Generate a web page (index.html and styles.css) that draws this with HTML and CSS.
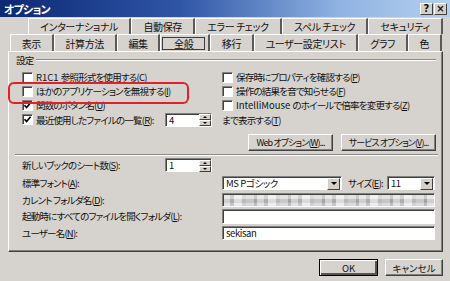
FILE: index.html
```html
<!DOCTYPE html>
<html lang="ja">

<head>
    <meta charset="UTF-8">
    <title>オプション</title>
    <link rel="stylesheet" href="styles.css">
</head>

<body>
    <div class="window">
        <div class="titlebar">
            <span class="title">オプション</span>
            <div class="title-buttons">
                <span class="tbtn">?</span>
                <span class="tbtn">×</span>
            </div>
        </div>

        <div class="tabs">
            <div class="tab-row back">
                <div class="tab">インターナショナル</div>
                <div class="tab">自動保存</div>
                <div class="tab">エラー チェック</div>
                <div class="tab">スペル チェック</div>
                <div class="tab">セキュリティ</div>
            </div>
            <div class="tab-row front">
                <div class="tab">表示</div>
                <div class="tab">計算方法</div>
                <div class="tab">編集</div>
                <div class="tab selected"><span>全般</span></div>
                <div class="tab">移行</div>
                <div class="tab">ユーザー設定リスト</div>
                <div class="tab">グラフ</div>
                <div class="tab">色</div>
            </div>
        </div>

        <div class="panel">
            <div class="legend">設定</div>

            <div class="checks">
                <label class="check"><span class="box"></span><span class="latin">R1C1&nbsp;</span>参照形式を使用する(<u>C</u>)</label>
                <label class="check"><span class="box"></span>保存時にプロパティを確認する(<u>P</u>)</label>
                <label class="check"><span class="box"></span>ほかのアプリケーションを無視する(<u>I</u>)</label>
                <label class="check"><span class="box"></span>操作の結果を音で知らせる(<u>F</u>)</label>
                <label class="check"><span class="box checked"><svg viewBox="0 0 9 9"><path d="M1.5 4.2 L3.6 6.5 L7.6 1.8" /></svg></span>関数のボタン名(<u>U</u>)</label>
                <label class="check"><span class="box"></span><span class="latin">IntelliMouse&nbsp;</span>のホイールで倍率を変更する(<u>Z</u>)</label>
            </div>

            <div class="recent-row">
                <label class="check recent"><span class="box checked"><svg viewBox="0 0 9 9"><path d="M1.5 4.2 L3.6 6.5 L7.6 1.8" /></svg></span>最近使用したファイルの一覧(<u>R</u>):</label>
                <div class="spin"><span class="value">4</span><span class="arrows"><i class="up"></i><i class="down"></i></span></div>
                <span class="after-spin">まで表示する(<u>T</u>)</span>
            </div>

            <div class="option-buttons">
                <button class="btn web">Web オプション(<u>W</u>)...</button>
                <button class="btn service">サービス オプション(<u>V</u>)...</button>
            </div>

            <div class="separator"></div>

            <div class="field-row first">
                <span class="label short">新しいブックのシート数(<u>S</u>):</span>
                <div class="spin"><span class="value">1</span><span class="arrows"><i class="up"></i><i class="down"></i></span></div>
            </div>
            <div class="field-row font-row">
                <span class="label">標準フォント(<u>A</u>):</span>
                <div class="select font-select"><span class="value">MS Pゴシック</span><span class="drop"><i></i></span></div>
                <span class="size-label">サイズ(<u>E</u>):</span>
                <div class="select size-select"><span class="value">11</span><span class="drop"><i></i></span></div>
            </div>
            <div class="field-row folder-row">
                <span class="label">カレント フォルダ名(<u>D</u>):</span>
                <div class="field blurred"></div>
            </div>
            <div class="field-row startup-row">
                <span class="label">起動時にすべてのファイルを開くフォルダ(<u>L</u>):</span>
                <div class="field tall"></div>
            </div>
            <div class="field-row user-row">
                <span class="label">ユーザー名(<u>N</u>):</span>
                <div class="field"><span class="value">sekisan</span></div>
            </div>
        </div>

        <div class="footer">
            <button class="btn ok">OK</button>
            <button class="btn cancel">キャンセル</button>
        </div>

        <!-- red callout around the option -->
        <div class="highlight"></div>
    </div>
</body>

</html>
```

FILE: styles.css
```css
* {
    box-sizing: border-box;
}

body {
    margin: 0;
    background-color: #d4d0c8;
    font-family: "Noto Sans CJK JP", "Noto Sans", sans-serif;
    font-size: 9.5px;
    font-feature-settings: "palt";
    letter-spacing: -0.8px;
    color: #111;
}

u {
    text-decoration-thickness: 1px;
    text-underline-offset: 1px;
}

.latin {
    letter-spacing: 0;
}

.window {
    position: relative;
    width: 450px;
    height: 281px;
    overflow: hidden;
    background-color: #d6d3ce;
}

/* Title bar */
.titlebar {
    height: 17px;
    display: flex;
    align-items: center;
    justify-content: space-between;
    padding: 0 3px 0 4px;
    background: linear-gradient(90deg, #0c2874, #2f56a6 40%, #8fb2e2 75%, #b4d0ee);
}

.title {
    color: #fff;
    font-weight: bold;
    font-size: 11px;
    letter-spacing: -0.8px;
}

.title-buttons {
    display: flex;
    gap: 1px;
}

.tbtn {
    width: 13px;
    height: 12px;
    display: flex;
    align-items: center;
    justify-content: center;
    background-color: #d4d0c8;
    border: 1px solid;
    border-color: #fff #404040 #404040 #fff;
    font: bold 10px "DejaVu Sans", sans-serif;
    letter-spacing: 0;
    line-height: 1;
}

/* Tabs */
.tabs {
    padding-top: 1px;
}

.tab-row {
    display: flex;
    height: 16px;
}

.tab-row.back {
    margin-left: 28px;
    width: 415px;
}

.tab-row.front {
    margin-left: 10px;
    width: 432px;
    height: 17px;
}

.tab {
    flex: 1 1 auto;
    display: flex;
    align-items: center;
    justify-content: center;
    white-space: nowrap;
    border-top: 1px solid #fff;
    border-left: 1px solid #fff;
    border-right: 2px solid #5a5a5a;
    font-size: 10px;
    letter-spacing: -0.4px;
}

.tab.selected {
    padding: 2px 3px 1px 1px;
}

.tab.selected span {
    display: flex;
    align-items: center;
    justify-content: center;
    width: 100%;
    height: 100%;
    border: 1px solid #3c3c3c;
}

/* Main panel */
.panel {
    margin-left: 8px;
    width: 435px;
    height: 201px;
    border: 1px solid;
    border-color: #fff #404040 #404040 #fff;
    box-shadow: inset -1px -1px #808080;
    padding: 1px 0 0 13px;
}

.legend {
    display: flex;
    align-items: center;
    gap: 3px;
    height: 14px;
    margin-left: -6px;
}

.legend::after {
    content: "";
    flex: 1;
    border-top: 1px solid #8a8a8a;
    border-bottom: 1px solid #fff;
    margin-right: 6px;
}

.checks {
    display: grid;
    grid-template-columns: 200px auto;
    grid-auto-rows: 14px;
    margin-top: 3px;
}

.check {
    display: flex;
    align-items: center;
    white-space: nowrap;
}

.box {
    width: 11px;
    height: 11px;
    flex: none;
    margin-right: 3px;
    background-color: #fff;
    border: 1px solid;
    border-color: #808080 #fff #fff #808080;
    box-shadow: inset 1px 1px #404040;
    display: flex;
    align-items: center;
    justify-content: center;
}

.box svg {
    width: 9px;
    height: 9px;
}

.box path {
    fill: none;
    stroke: #000;
    stroke-width: 1.7;
}

.recent-row {
    display: flex;
    align-items: center;
    height: 15px;
}

.check.recent {
    width: 143px;
}

.after-spin {
    margin-left: 10px;
}

/* Spin boxes and fields */
.spin,
.select,
.field {
    position: relative;
    display: flex;
    align-items: center;
    height: 14px;
    background-color: #fff;
    border: 1px solid;
    border-color: #808080 #fff #fff #808080;
    box-shadow: inset 1px 1px #404040;
    padding-left: 3px;
}

.spin {
    width: 47px;
}

.spin .value,
.select .value,
.field .value {
    flex: 1;
    white-space: nowrap;
    letter-spacing: -0.4px;
}

.arrows {
    width: 12px;
    height: 12px;
    display: flex;
    flex-direction: column;
    margin-top: 1px;
}

.arrows i,
.drop {
    flex: 1;
    display: flex;
    align-items: center;
    justify-content: center;
    background-color: #d4d0c8;
    border: 1px solid;
    border-color: #fff #404040 #404040 #fff;
}

.arrows i::after,
.drop i {
    content: "";
    width: 0;
    height: 0;
    border-left: 2px solid transparent;
    border-right: 2px solid transparent;
}

.arrows .up::after {
    border-bottom: 2px solid #000;
}

.arrows .down::after,
.drop i {
    border-top: 2px solid #000;
}

.drop {
    flex: none;
    width: 13px;
    height: 12px;
    margin-top: 1px;
}

.drop i {
    border-left-width: 3px;
    border-right-width: 3px;
    border-top-width: 3px;
}

/* Option buttons */
.option-buttons {
    display: flex;
    justify-content: flex-end;
    gap: 8px;
    margin-top: 7px;
    padding-right: 6px;
}

.btn {
    height: 17px;
    padding: 0;
    font: inherit;
    color: #111;
    background-color: #d6d3ce;
    border: 1px solid;
    border-color: #fff #404040 #404040 #fff;
    box-shadow: inset -1px -1px #808080;
    white-space: nowrap;
}

.btn.web,
.btn.service {
    font-size: 9px;
    letter-spacing: -0.9px;
}

.btn.web {
    width: 85px;
}

.btn.service {
    width: 95px;
}

.separator {
    height: 2px;
    margin: 3px 4px 0 -7px;
    border-top: 1px solid #8a8a8a;
    border-bottom: 1px solid #fff;
}

/* Lower fields */
.field-row {
    display: flex;
    align-items: center;
    height: 14px;
}

.field-row.first {
    margin-top: 2px;
}

.font-row {
    margin-top: 4px;
}

.folder-row {
    margin-top: 3px;
}

.startup-row {
    margin-top: 2px;
}

.user-row {
    margin-top: 3px;
}

.label {
    width: 200px;
    white-space: nowrap;
}

.label.short {
    width: 143px;
}

.font-select {
    width: 120px;
    padding-right: 1px;
}

.size-label {
    width: 45px;
    padding-left: 6px;
    white-space: nowrap;
}

.size-select {
    width: 48px;
    padding-right: 1px;
}

.field {
    width: 213px;
}

.field.tall {
    height: 15px;
}

.field.blurred {
    background:
        linear-gradient(180deg, rgba(255, 255, 255, 0.35) 0 5px, rgba(0, 0, 0, 0.06) 5px 9px, rgba(255, 255, 255, 0.2) 9px),
        repeating-linear-gradient(90deg, #dcdcdc 0 7px, #b9b9b9 7px 11px, #e8e8e8 11px 19px, #c6c6c6 19px 23px, #d2d2d2 23px 31px, #aeaeae 31px 34px);
}

/* Dialog buttons */
.footer {
    display: flex;
    justify-content: flex-end;
    gap: 7px;
    margin-top: 7px;
    padding-right: 7px;
}

.btn.ok {
    width: 59px;
    border: 1px solid #000;
    box-shadow: inset 1px 1px #fff, inset -2px -2px #555;
}

.btn.cancel {
    width: 58px;
}

.highlight {
    position: absolute;
    left: 8px;
    top: 82px;
    width: 181px;
    height: 22px;
    border: 2px solid #e0202a;
    border-radius: 6px;
}
```
